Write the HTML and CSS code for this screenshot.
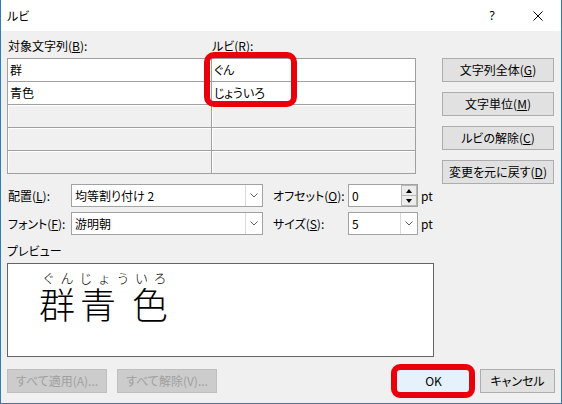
FILE: index.html
```html
<!DOCTYPE html>
<html lang="ja">
<head>
<meta charset="utf-8">
<title>ルビ</title>
<link rel="stylesheet" href="styles.css">
</head>
<body>
<div class="dialog">
  <div class="titlebar">
    <div class="title">ルビ</div>
    <div class="tb-btn help">?</div>
    <div class="tb-btn close"><svg width="10" height="10" viewBox="0 0 10 10"><path d="M0.5 0.5 L9.5 9.5 M9.5 0.5 L0.5 9.5" stroke="#000" stroke-width="1" fill="none"/></svg></div>
  </div>
  <div class="content">
    <div class="top">
      <div class="main">
        <div class="col-labels">
          <span>対象文字列(<u>B</u>):</span>
          <span>ルビ(R):</span>
        </div>
        <div class="table-wrap">
          <div class="table">
            <div class="cell">群</div><div class="cell">ぐん</div>
            <div class="cell">青色</div><div class="cell">じょういろ</div>
            <div class="cell empty"></div><div class="cell empty"></div>
            <div class="cell empty"></div><div class="cell empty"></div>
            <div class="cell empty"></div><div class="cell empty"></div>
          </div>
          <div class="mark mark-ruby"></div>
        </div>
        <div class="controls">
          <div class="ctrl-row">
            <span class="lbl1">配置(<u>L</u>):</span>
            <div class="combo wide"><span class="val">均等割り付け 2</span><span class="drop"><svg width="8" height="5" viewBox="0 0 8 5"><path d="M0.5 0.5 L4 4 L7.5 0.5" stroke="#606060" stroke-width="1" fill="none"/></svg></span></div>
            <span class="lbl2">オフセット(<u>O</u>):</span>
            <div class="spin"><span class="val">0</span><span class="spin-btns"><span class="sb"><span class="tri-up"></span></span><span class="sb"><span class="tri-down"></span></span></span></div>
            <span class="unit">pt</span>
          </div>
          <div class="ctrl-row">
            <span class="lbl1">フォント(<u>F</u>):</span>
            <div class="combo wide"><span class="val">游明朝</span><span class="drop"><svg width="8" height="5" viewBox="0 0 8 5"><path d="M0.5 0.5 L4 4 L7.5 0.5" stroke="#606060" stroke-width="1" fill="none"/></svg></span></div>
            <span class="lbl2">サイズ(<u>S</u>):</span>
            <div class="combo small"><span class="val">5</span><span class="drop"><svg width="8" height="5" viewBox="0 0 8 5"><path d="M0.5 0.5 L4 4 L7.5 0.5" stroke="#606060" stroke-width="1" fill="none"/></svg></span></div>
            <span class="unit">pt</span>
          </div>
        </div>
        <div class="preview-label">プレビュー</div>
        <div class="preview">
          <div class="ruby-line">ぐんじょういろ</div>
          <div class="base-line"><span class="c1">群</span><span class="c2">青</span><span class="c3">色</span></div>
        </div>
      </div>
      <div class="side">
        <button class="btn side-btn">文字列全体(<u>G</u>)</button>
        <button class="btn side-btn">文字単位(<u>M</u>)</button>
        <button class="btn side-btn">ルビの解除(<u>C</u>)</button>
        <button class="btn side-btn">変更を元に戻す(<u>D</u>)</button>
      </div>
    </div>
    <div class="footer">
      <div class="foot-left">
        <button class="btn disabled">すべて適用(A)...</button>
        <button class="btn disabled">すべて解除(V)...</button>
      </div>
      <div class="spacer"></div>
      <div class="foot-right">
        <button class="btn default">OK<span class="mark mark-ok"></span></button>
        <button class="btn normal">キャンセル</button>
      </div>
    </div>
  </div>
</div>
</body>
</html>
```

FILE: styles.css
```css
* { box-sizing: border-box; }
html, body { margin: 0; padding: 0; }
body {
  width: 562px;
  height: 404px;
  overflow: hidden;
  font-family: "Noto Sans CJK JP", "Noto Sans", sans-serif;
  font-size: 12px;
  font-feature-settings: "palt";
  color: #000;
  background: #f0f0f0;
}
u { text-decoration: underline; text-underline-offset: 1px; }

.dialog {
  width: 562px;
  height: 404px;
  border: 1px solid #2f7bbf;
  border-top: none;
  background: #f0f0f0;
  display: flex;
  flex-direction: column;
}

.titlebar {
  height: 31px;
  background: #fff;
  display: flex;
  align-items: center;
  flex-shrink: 0;
}
.title { flex: 1; padding-left: 6px; line-height: 16px; }
.tb-btn {
  width: 46px;
  height: 31px;
  display: flex;
  align-items: center;
  justify-content: center;
}
.help { font-family: "Noto Sans", sans-serif; font-size: 12px; }

.content { flex: 1; display: flex; flex-direction: column; }
.top { display: flex; padding: 7px 0 0 6px; }
.main { width: 427px; }

.col-labels {
  display: grid;
  grid-template-columns: 204px 1fr;
  padding-left: 1px;
  height: 16px;
  line-height: 16px;
}

.table-wrap { position: relative; margin-top: 4px; width: 409px; }
.table {
  display: grid;
  grid-template-columns: 203px 203px;
  grid-auto-rows: 22px;
  gap: 1px;
  padding: 1px;
  background: #a0a0a0;
}
.cell { background: #fff; line-height: 22px; padding-left: 2px; white-space: nowrap; }
.cell.empty { background: #f0f0f0; box-shadow: inset 1px 1px 0 #fff; }

.mark {
  position: absolute;
  border: 6px solid #e8000b;
  border-radius: 10px;
  pointer-events: none;
}
.mark-ruby { left: 197px; top: -6px; width: 93px; height: 55px; }

.controls { margin-top: 10px; display: flex; flex-direction: column; gap: 5px; }
.ctrl-row { display: flex; align-items: center; height: 23px; }
.lbl1 { width: 64px; padding-left: 1px; white-space: nowrap; }
.lbl2 { width: 75px; margin-left: 10px; white-space: nowrap; }
.unit { margin-left: 3px; }

.combo, .spin {
  height: 23px;
  background: #fff;
  border: 1px solid #a2a2a2;
  display: flex;
}
.combo.wide { width: 192px; }
.combo.small, .spin { width: 70px; }
.val { flex: 1; padding-left: 3px; line-height: 21px; white-space: nowrap; }
.drop {
  width: 17px;
  border-left: 1px solid #dadada;
  display: flex;
  align-items: center;
  justify-content: center;
}
.spin-btns { width: 16px; display: flex; flex-direction: column; }
.sb {
  flex: 1;
  background: #ececec;
  border: 1px solid #b8b8b8;
  display: flex;
  align-items: center;
  justify-content: center;
}
.sb + .sb { border-top: none; }
.tri-up { width: 0; height: 0; border-left: 3.5px solid transparent; border-right: 3.5px solid transparent; border-bottom: 4px solid #000; }
.tri-down { width: 0; height: 0; border-left: 3.5px solid transparent; border-right: 3.5px solid transparent; border-top: 4px solid #000; }

.preview-label { margin-top: 8px; line-height: 16px; }
.preview {
  margin-top: 4px;
  width: 427px;
  height: 94px;
  background: #fff;
  border: 1px solid #646464;
  font-family: "Liberation Serif", "Noto Sans CJK JP Light", "Noto Sans CJK JP", serif;
  font-weight: 300;
  font-feature-settings: normal;
}
.ruby-line {
  margin-top: 7px;
  padding-left: 34px;
  font-size: 13px;
  line-height: 16px;
  letter-spacing: 5.6px;
}
.base-line {
  margin-top: 2px;
  font-size: 36px;
  line-height: 36px;
  display: flex;
}
.c1 { margin-left: 31px; }
.c2 { margin-left: 5px; }
.c3 { margin-left: 16px; }

.side {
  margin-left: 8px;
  padding-top: 20px;
  display: flex;
  flex-direction: column;
  gap: 10px;
}

.btn {
  font: inherit;
  font-feature-settings: "palt";
  height: 24px;
  padding: 0;
  line-height: 22px;
  text-align: center;
  color: #000;
  background: #e1e1e1;
  border: 1px solid #adadad;
  white-space: nowrap;
}
.side-btn { width: 112px; }

.footer {
  margin-top: auto;
  padding: 0 6px 10px 6px;
  display: flex;
}
.foot-left, .foot-right { display: flex; gap: 10px; }
.foot-right { gap: 9px; }
.spacer { flex: 1; }
.btn.disabled { width: 100px; background: #cccccc; border-color: #bfbfbf; color: #a0a0a0; }
.btn.default { width: 75px; position: relative; background: #e5f1fb; border-color: #0078d7; }
.btn.normal { width: 75px; }
.mark-ok { top: -6px; bottom: -6px; left: -6px; right: -5px; border-radius: 9px; }
```
